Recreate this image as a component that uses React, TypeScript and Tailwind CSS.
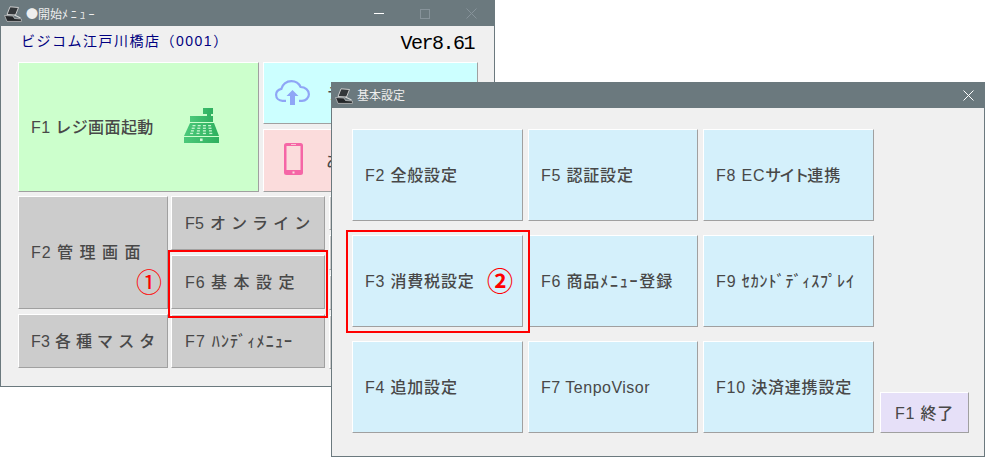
import React from 'react';

// Botón estilo WinForms: borde claro arriba/izquierda, gris abajo/derecha
const bevel = 'flex items-center pt-[2px] border border-t-white border-l-white border-r-[#a0a0a0] border-b-[#a0a0a0] text-[#484848] font-medium whitespace-nowrap overflow-hidden';

const PosIcon: React.FC<{ className: string }> = ({ className }) => (
  <svg className={className} viewBox="0 0 18 16">
    <path d="M6 0.8 L14.5 1.5 L11.5 9 L3 8.5 Z" fill="#33373a" stroke="#d8d8d8" strokeWidth="0.9" />
    <path d="M0.6 9.5 L9 10 L10.5 12.5 L17.4 13 L17.4 15.4 L3 15.4 Z" fill="#24272a" stroke="#cfcfcf" strokeWidth="0.7" />
    <path d="M10.5 9 L16.5 12" stroke="#d8d8d8" strokeWidth="1.1" />
  </svg>
);

const CashRegister = () => (
  <svg className="w-[35px] h-[35px] mb-[5px]" viewBox="0 0 35 35">
    <defs>
      <linearGradient id="reg" x1="0" x2="1" y1="0" y2="0">
        <stop offset="0" stopColor="#4cc97a" />
        <stop offset="1" stopColor="#2fb05f" />
      </linearGradient>
    </defs>
    <path d="M19 0 H29 V6 H27 V8 H29 V14 H6 V8 H23 V6 H19 Z" fill="url(#reg)" />
    <path d="M6 15 H30 L35 28 H0 Z" fill="url(#reg)" />
    {[0, 1, 2, 3].map((r) => (
      <g key={r} fill="#c9f5d0">
        {[0, 1, 2, 3].map((c) => (
          <rect key={c} x={8.5 - r * 0.8 + c * (5.2 + r * 0.4)} y={17 + r * 2.6} width="3" height="1.3" />
        ))}
      </g>
    ))}
    <rect x="0" y="29" width="35" height="6" fill="url(#reg)" />
    <rect x="16" y="30.5" width="2.6" height="2.6" fill="#d6f7da" />
  </svg>
);

const CloudUp = () => (
  <svg className="w-[35px] h-[25px] mb-[3px]" viewBox="0 0 35 25" fill="none">
    <path
      d="M11 20.8 H7.5 C3.8 20.8 1.1 18.2 1.1 14.8 C1.1 11.6 3.4 9.4 6.4 8.8 C7.2 4.4 11.4 1.1 16.4 1.1 C20.6 1.1 24 3.4 25.6 7 C30.2 7 33.9 10.2 33.9 14.2 C33.9 18 30.8 20.8 27 20.8 H24"
      stroke="#8fa6f6"
      strokeWidth="2.2"
    />
    <path d="M17.5 10 L23.5 16 H20 V25 H15 V16 H11.5 Z" fill="#8fa6f6" />
  </svg>
);

const Phone = () => (
  <svg className="w-[19px] h-[32px] mb-[5px]" viewBox="0 0 19 32">
    <rect width="19" height="32" rx="2.5" fill="#f566a6" />
    <rect x="2.5" y="3" width="14" height="24" fill="#fbdcdc" />
    <rect x="7" y="1.2" width="5" height="0.8" fill="#fbdcdc" />
    <rect x="8.5" y="28.5" width="2" height="2" fill="#fbdcdc" />
  </svg>
);

const App: React.FC = () => {
  return (
    <div className="relative w-[985px] h-[457px] overflow-hidden bg-white [font-family:'Liberation_Sans','Noto_Sans_CJK_JP',sans-serif]">
      {/* Ventana de atrás: menú de inicio */}
      <div className="absolute left-0 top-0 w-[495px] h-[387px] border border-[#6b797e] bg-[#f0f0f0] flex flex-col">
        <div className="h-[25px] shrink-0 bg-[#6b797e] flex items-center pl-[3px] text-[12px] text-[#eeeeee]">
          <PosIcon className="w-[18px] h-[16px] mr-[4px]" />
          <span className="[font-family:'Noto_Sans_CJK_JP',sans-serif]">●開始</span>
          <span className="[font-family:'Noto_Sans_CJK_JP',sans-serif] tracking-[2.8px]">ﾒﾆｭｰ</span>
          <div className="ml-auto flex items-center">
            <div className="w-[10px] h-px bg-white mr-[36px]" />
            <div className="w-[10px] h-[10px] border border-[#87939a] mr-[36px]" />
            <svg className="w-[11px] h-[11px] mr-[17px]" viewBox="0 0 11 11">
              <path d="M0.5 0.5 L10.5 10.5 M10.5 0.5 L0.5 10.5" stroke="#87939a" />
            </svg>
          </div>
        </div>
        <div className="h-[36px] shrink-0 flex items-center justify-between pl-[20px] pr-[20px]">
          <span className="mb-[5px] text-[14px] text-[#000080] tracking-[1.5px]">ビジコム江戸川橋店（0001）</span>
          <span className="[font-family:'Liberation_Mono',monospace] text-[20px] text-black tracking-[-1.5px]">Ver8.61</span>
        </div>
        <div className="flex gap-[4px] pl-[17px] h-[130px] shrink-0">
          <div className={`${bevel} w-[241px] bg-[#ccffcc] pl-[12px] text-[16px] tracking-[0.4px]`}>
            <span className="w-[153px]">F1 レジ画面起動</span>
            <CashRegister />
          </div>
          <div className="flex flex-col gap-[5px] w-[215px]">
            <div className={`${bevel} h-[62px] bg-[#ccffff] pl-[11px] text-[16px]`}>
              <CloudUp />
              <span className="ml-[17px]">テ</span>
            </div>
            <div className={`${bevel} h-[63px] bg-[#fbdcdc] pl-[20px] text-[16px]`}>
              <Phone />
              <span className="ml-[23px]">あ</span>
            </div>
          </div>
        </div>
        <div className="flex mt-[4px] pl-[17px]">
          <div className="flex flex-col gap-[5px] w-[150px]">
            <div className={`${bevel} h-[113px] bg-[#cccccc] pl-[12px] pb-[2px] text-[16px] tracking-[1px]`}>F2 管 理 画 面</div>
            <div className={`${bevel} h-[54px] bg-[#cccccc] pl-[12px] text-[16px] tracking-[0.3px]`}>F3 各 種 マ ス タ</div>
          </div>
          <div className="flex flex-col gap-[5px] w-[154px] ml-[3px]">
            <div className={`${bevel} h-[54px] bg-[#cccccc] pl-[13px] text-[16px] tracking-[0.3px]`}>
              <span>
                <span className="mr-px">F5</span> オ ン ラ イ ン
              </span>
            </div>
            <div className={`${bevel} h-[54px] bg-[#cccccc] pl-[13px] text-[16px] tracking-[1px]`}>F6 基 本 設 定</div>
            <div className={`${bevel} h-[54px] bg-[#cccccc] pl-[13px] text-[16px] tracking-[1.2px]`}>F7 ﾊﾝﾃﾞｨﾒﾆｭｰ</div>
          </div>
          <div className="flex flex-col gap-[5px] w-[149px] ml-[4px]">
            <div className={`${bevel} h-[34px] bg-[#cccccc]`} />
            <div className={`${bevel} h-[35px] bg-[#cccccc]`} />
            <div className={`${bevel} h-[35px] bg-[#cccccc]`} />
            <div className={`${bevel} h-[54px] bg-[#cccccc]`} />
          </div>
        </div>
      </div>

      {/* Ventana de delante: configuración básica */}
      <div className="absolute left-[331px] top-[82px] w-[654px] h-[375px] border border-[#6b797e] bg-[#f0f0f0] flex flex-col">
        <div className="h-[25px] shrink-0 bg-[#6b797e] flex items-center pl-[3px] text-[12px] text-[#eeeeee]">
          <PosIcon className="w-[18px] h-[16px] mr-[4px]" />
          <span>基本設定</span>
          <svg className="ml-auto w-[11px] h-[11px] mr-[10px]" viewBox="0 0 11 11">
            <path d="M0.5 0.5 L10.5 10.5 M10.5 0.5 L0.5 10.5" stroke="#ffffff" />
          </svg>
        </div>
        <div className="grid grid-cols-[171px_170px_171px_90px] auto-rows-[92px] gap-x-[5px] gap-y-[14px] pl-[20px] pt-[21px] text-[16px] tracking-[0.8px]">
          <div className={`${bevel} bg-[#d4f0fb] pl-[12px]`}>F2 全般設定</div>
          <div className={`${bevel} bg-[#d4f0fb] pl-[12px]`}>F5 認証設定</div>
          <div className={`${bevel} bg-[#d4f0fb] pl-[12px]`}>
            <span>
              F8 EC<span className="tracking-[-2px]">サイト</span>連携
            </span>
          </div>
          <div />
          <div className={`${bevel} bg-[#d4f0fb] pl-[12px]`}>F3 消費税設定</div>
          <div className={`${bevel} bg-[#d4f0fb] pl-[12px]`}>
            <span>
              F6 商品<span className="tracking-[1.8px]">ﾒﾆｭｰ</span>登録
            </span>
          </div>
          <div className={`${bevel} bg-[#d4f0fb] pl-[12px] tracking-[0.9px]`}>F9 ｾｶﾝﾄﾞﾃﾞｨｽﾌﾟﾚｲ</div>
          <div />
          <div className={`${bevel} bg-[#d4f0fb] pl-[12px]`}>F4 追加設定</div>
          <div className={`${bevel} bg-[#d4f0fb] pl-[12px] tracking-[0.5px]`}>F7 TenpoVisor</div>
          <div className={`${bevel} bg-[#d4f0fb] pl-[12px]`}>F10 決済連携設定</div>
          <div className={`${bevel} bg-[#e6e0f8] ml-px h-[41px] self-end justify-center`}>F1 終了</div>
        </div>
      </div>

      {/* Anotaciones rojas sobre la captura */}
      <div className="absolute left-[168px] top-[250px] w-[160px] h-[68px] border-2 border-[#ff0000]" />
      <div className="absolute left-[346px] top-[230px] w-[184px] h-[103px] border-2 border-[#ff0000]" />
      <span className="absolute left-[136px] top-[265px] text-[26px] leading-[36px] text-[#ff0000]">①</span>
      <span className="absolute left-[487px] top-[264px] text-[26px] leading-[36px] font-bold text-[#ff0000]">②</span>
    </div>
  );
};

export default App;
